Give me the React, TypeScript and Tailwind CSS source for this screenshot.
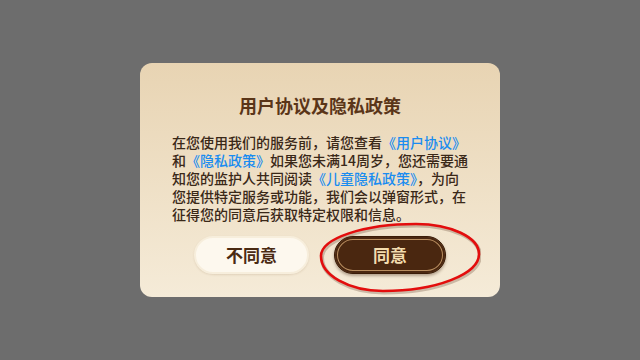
const font = { fontFamily: '"Noto Sans CJK SC", "Noto Sans", sans-serif' }

function Link({ children }: { children: string }) {
  return <span className="text-[#1a8cf0]">{children}</span>
}

export default function App() {
  return (
    <div
      className="w-[640px] h-[360px] bg-[#6d6d6d] flex items-center justify-center"
      style={font}
    >
      <div className="w-[360px] h-[234px] rounded-[12px] bg-gradient-to-b from-[#e8d4b3] to-[#f5ebd8] flex flex-col items-center pt-[29px]">
        <h1 className="text-[18px] leading-[26px] font-bold text-[#5a3518]">
          用户协议及隐私政策
        </h1>
        <div className="mt-[15px] w-[300px] pl-[2px] text-[14px] leading-[18px] font-medium text-[#3a2818]">
          <div>
            在您使用我们的服务前，请您查看<Link>《用户协议》</Link>
          </div>
          <div>
            和<Link>《隐私政策》</Link>如果您未满14周岁，您还需要通
          </div>
          <div>
            知您的监护人共同阅读<Link>《儿童隐私政策》</Link>，为向
          </div>
          <div>您提供特定服务或功能，我们会以弹窗形式，在</div>
          <div>征得您的同意后获取特定权限和信息。</div>
        </div>
        <div className="mt-[13px] flex gap-[25px]">
          <button className="w-[115px] h-[38px] rounded-full bg-[#fdf8ee] border-2 border-[#f7eedc] shadow-[0_1px_2px_rgba(120,90,50,0.15)] text-[17px] font-bold text-[#4a2a12]">
            不同意
          </button>
          <div className="relative">
            <button className="w-[112px] h-[38px] rounded-full bg-[#4a2710] border border-[#3a1c08] shadow-[inset_0_0_0_2px_#4a2710,inset_0_0_0_3px_#b88d5f,0_2px_3px_rgba(60,30,10,0.35)] text-[17px] font-bold text-[#f3dcae]">
              同意
            </button>
            <svg
              className="absolute left-[-18px] top-[-17px] pointer-events-none"
              width="165"
              height="80"
              viewBox="315 220 165 80"
            >
              <path
                d="M320 257 C320 239.3 362.6 225 415 225 C449.8 225 478 238.4 478 255 C478 275.4 435 292 382 292 C347.8 292 320 276.3 320 257 Z"
                fill="none"
                stroke="rgba(80,40,20,0.25)"
                strokeWidth="4"
                transform="translate(1 1.5)"
              />
              <path
                d="M320 257 C320 239.3 362.6 225 415 225 C449.8 225 478 238.4 478 255 C478 275.4 435 292 382 292 C347.8 292 320 276.3 320 257 Z"
                fill="none"
                stroke="#e30d0d"
                strokeWidth="2.6"
              />
            </svg>
          </div>
        </div>
      </div>
    </div>
  )
}
